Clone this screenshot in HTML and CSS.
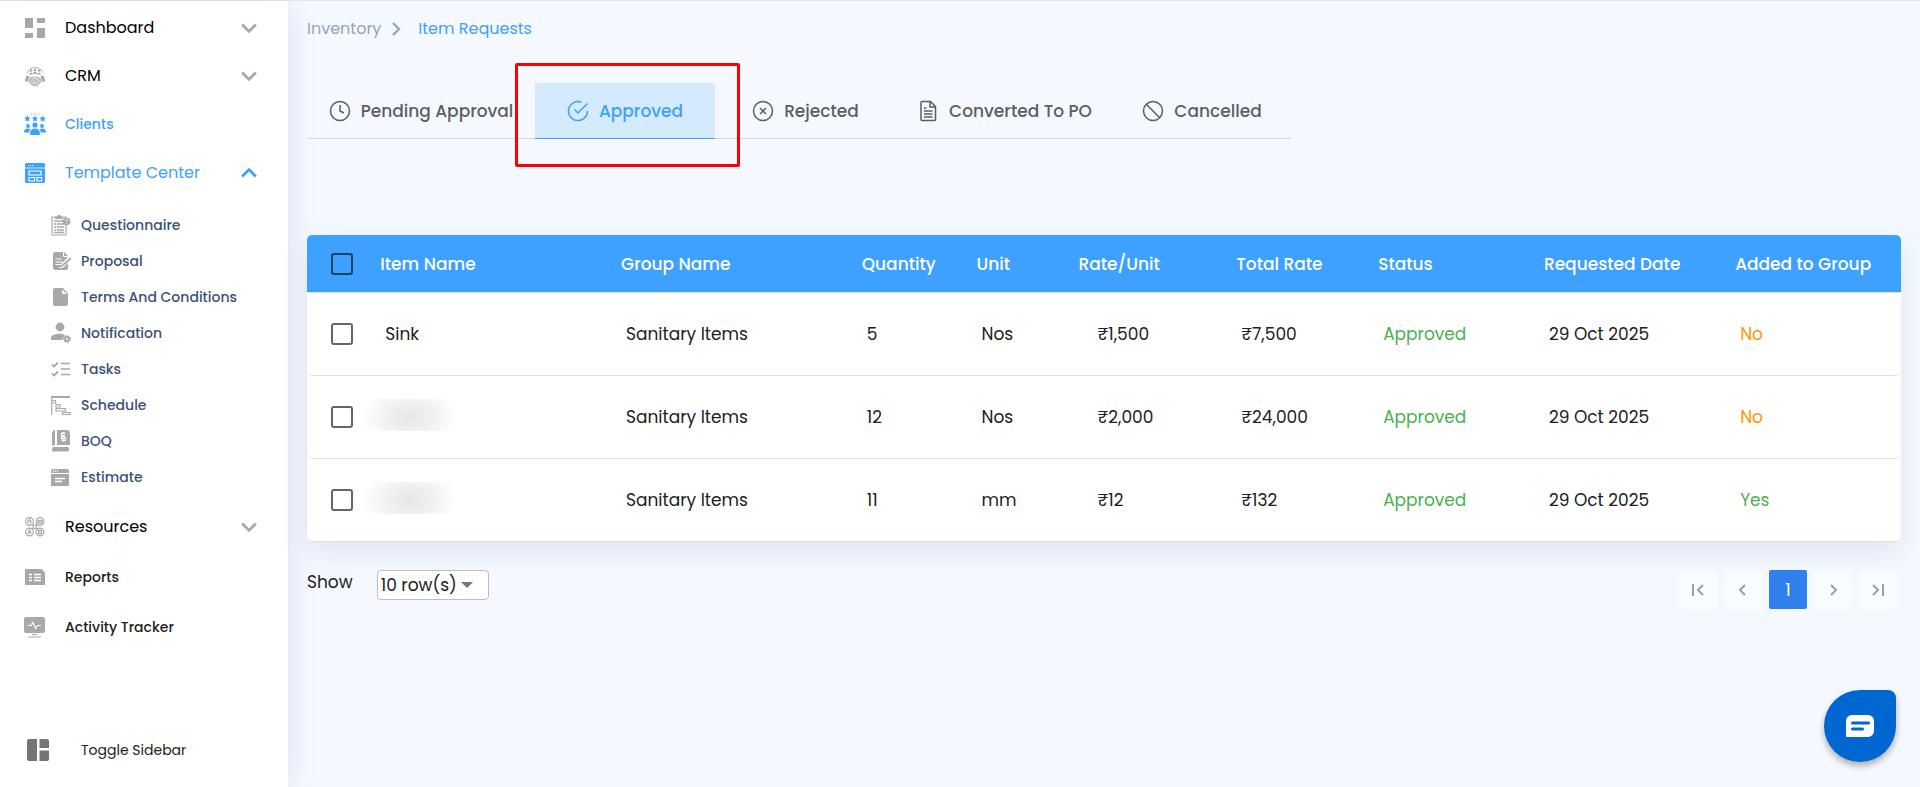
FILE: index.html
```html
<!DOCTYPE html>
<html lang="en">
<head>
<meta charset="utf-8">
<meta name="viewport" content="width=device-width, initial-scale=1">
<title>Item Requests</title>
<link rel="stylesheet" href="styles.css">
</head>
<body>
<div class="app">
  <aside class="sidebar">
    <nav class="nav" aria-label="Main">
      <button class="nav-item" type="button">
        <svg class="icon" viewBox="0 0 22 22" fill="currentColor"><path d="M1 1h8v10H1zM13 1h8v5h-8zM1 16h8v5H1zM13 11h8v10h-8z"/></svg>
        <span class="nav-label">Dashboard</span>
        <svg class="chevron" viewBox="0 0 14 10"><path d="M1 2l6 6 6-6"/></svg>
      </button>
      <button class="nav-item" type="button">
        <svg class="icon" viewBox="0 0 22 22" fill="currentColor"><path d="M3 8a8.500 8.500 0 0 1 16 0" fill="none" stroke="currentColor" stroke-width="1" stroke-dasharray="4 1"/><circle cx="7" cy="5.500" r="1.300"/><circle cx="11" cy="5" r="1.400"/><circle cx="15" cy="5.500" r="1.300"/><path d="M5 9.500c0-2.500 4-2.500 4 0zM9.200 9c0-3 3.600-3 3.600 0zM13 9.500c0-2.500 4-2.500 4 0zM2.500 10.500l3 .8L3.500 17 .8 16zM19.500 10.500l-3 .8 2 5.700 2.700-1z"/><path d="M5.500 12.500l4-1.300 3 .3 4 1.300 1.300 4-2 2-3 2.500h-3.500l-3-2.500-2-2z" fill-opacity=".75"/><path d="M8 14l3-1.500 4.500 4M7 16l3.500 3.500M9.500 15.500l4 3.500" fill="none" stroke="#fff" stroke-width=".8"/></svg>
        <span class="nav-label">CRM</span>
        <svg class="chevron" viewBox="0 0 14 10"><path d="M1 2l6 6 6-6"/></svg>
      </button>
      <a class="nav-item nav-item-link nav-item-active" href="#clients">
        <svg class="icon" viewBox="0 0 22 22" fill="currentColor"><path d="M3.300 2.500l1 2 2.200.3-1.600 1.500.4 2.200-2-1-2 1 .4-2.200L.1 4.800l2.200-.3zM18.700 2.500l1 2 2.200.3-1.600 1.500.4 2.200-2-1-2 1 .4-2.200-1.600-1.500 2.200-.3zM11 2.500l1 2 2.200.3-1.600 1.500.4 2.200-2-1-2 1 .4-2.200-1.600-1.500 2.200-.3z"/><path d="M11 0v1.500M7.500 1l.8 1M14.500 1l-.8 1" stroke="currentColor" stroke-width=".8"/><circle cx="11" cy="12" r="2.600"/><circle cx="4" cy="13" r="1.900"/><circle cx="18" cy="13" r="1.900"/><path d="M6.200 22v-2.500c0-5.300 9.600-5.300 9.600 0V22zM0 19.500c0-4.500 4-4.500 6.500-3-1 1-1.200 2-1.200 3zM22 19.500c0-4.500-4-4.500-6.500-3 1 1 1.200 2 1.200 3z"/></svg>
        <span class="nav-label">Clients</span>
      </a>
      <button class="nav-item nav-item-active" type="button" aria-expanded="true">
        <svg class="icon" viewBox="0 0 22 22"><rect x="1" y="1" width="20" height="20" rx="1.500" fill="currentColor"/><g fill="none" stroke="#fff"><path d="M1 6h20" stroke-width=".8"/><path d="M4 3.500h6" stroke-width="1" stroke-dasharray="1 1"/><path d="M5 9h12v4H5zM5 15.500h5.500V19H5zM13 15.500h4.500V19H13z" stroke-width="1.200"/></g></svg>
        <span class="nav-label">Template Center</span>
        <svg class="chevron" viewBox="0 0 14 10"><path d="M1 8l6-6 6 6"/></svg>
      </button>
      <div class="subnav">
        <a class="subnav-item" href="#questionnaire">
          <svg class="sub-icon" viewBox="0 0 20 22"><path d="M1 3h14v18H1z" fill="none" stroke="currentColor" stroke-width="1.200"/><path d="M4 5V3h2c0-3 4-3 4 0h2v2z" fill="currentColor"/><path d="M3 7h9M3 10h2M6 10h7M3 13h2M6 13h7M3 16h2M6 16h7M3 18.500h10" stroke="currentColor" stroke-width="1.300"/><circle cx="15.500" cy="7.500" r="3.800" fill="currentColor"/><path d="M14.300 6.500c0-1.500 2.500-1.300 2.300 0-.2.800-1 .7-1 1.500M15.600 9v.8" fill="none" stroke="#fff" stroke-width=".8"/></svg>
          <span>Questionnaire</span></a>
        <a class="subnav-item" href="#proposal">
          <svg class="sub-icon" viewBox="0 0 20 22"><path d="M4 2h9l4 4v12a2 2 0 0 1-2 2H4a2 2 0 0 1-2-2V4a2 2 0 0 1 2-2z" fill="currentColor"/><path d="M12.500 2v4.500H17M4.500 9h6M4.500 12h7M4.500 14.500h5M8 17.500h4" fill="none" stroke="#fff" stroke-width="1"/><path d="M11 16l8-8" stroke="#fff" stroke-width="4"/><path d="M11.500 15.500L20 8" stroke="currentColor" stroke-width="1.800"/></svg>
          <span>Proposal</span></a>
        <a class="subnav-item" href="#terms">
          <svg class="sub-icon" viewBox="0 0 20 22"><path d="M4 2h8l5 6v10a2 2 0 0 1-2 2H4a2 2 0 0 1-2-2V4a2 2 0 0 1 2-2z" fill="currentColor"/><path d="M11 3.500V8h4.800z" fill="#fff"/></svg>
          <span>Terms And Conditions</span></a>
        <a class="subnav-item" href="#notification">
          <svg class="sub-icon" viewBox="0 0 20 22" fill="currentColor"><circle cx="9" cy="5" r="4.400"/><path d="M0 18v-2c0-4 9-5.500 14-3l-3 5z"/><circle cx="16" cy="17" r="3" stroke="currentColor" stroke-width="1.600" stroke-dasharray="1.800 1"/><circle cx="16" cy="17" r="1" fill="#fff"/></svg>
          <span>Notification</span></a>
        <a class="subnav-item" href="#tasks">
          <svg class="sub-icon" viewBox="0 0 20 22" fill="none" stroke="currentColor"><path d="M1 6.500l2 2 4-4M1 15.500l2 2 4-4" stroke-width="1.800"/><path d="M10 5.500h9M10 11h9M10 16.500h9" stroke-width="1.400"/></svg>
          <span>Tasks</span></a>
        <a class="subnav-item" href="#schedule">
          <svg class="sub-icon" viewBox="0 0 20 22" fill="none" stroke="currentColor"><path d="M0 3h19" stroke-width="2"/><path d="M.7 3v18M1 6.500h3.500V9H1M5 10.500h4V13H5zM5 14.500h9.500V17H5zM11.500 18.500H19V20.500h-7.500z" stroke-width="1.200"/></svg>
          <span>Schedule</span></a>
        <a class="subnav-item" href="#boq">
          <svg class="sub-icon" viewBox="0 0 20 22"><path d="M4 0v15c-1.500 0-3 .5-3 1.500V4c0-2 1-4 3-4zM6 0h10c2 0 3 2 3 4v11H6z" fill="currentColor"/><rect x="1" y="17" width="17" height="4.500" rx="1.500" fill="currentColor"/><path d="M14 4c-1-2-4.500-1-3.500 1s4 2 4 4-2 2.500-4 1M14 6c-4-1-5 3-1 3" fill="none" stroke="#fff" stroke-width="1.500"/></svg>
          <span>BOQ</span></a>
        <a class="subnav-item" href="#estimate">
          <svg class="sub-icon" viewBox="0 0 20 22"><path d="M2 3h14a2 2 0 0 1 2 2v15H0V5a2 2 0 0 1 2-2z" fill="currentColor"/><path d="M0 7.500h18" stroke="#fff" stroke-width="1"/><path d="M2 5h6" stroke="#fff" stroke-width="1.300" stroke-dasharray="1 1"/><path d="M4 12.500h10M4 15.500h7" stroke="#fff" stroke-width="1.400"/></svg>
          <span>Estimate</span></a>
      </div>
      <button class="nav-item" type="button">
        <svg class="icon" viewBox="0 0 22 22" fill="none" stroke="currentColor"><g stroke-width="1.200"><circle cx="5.500" cy="5.500" r="3.900"/><circle cx="16" cy="5.500" r="3.900"/><circle cx="5.500" cy="16" r="3.900"/><circle cx="16" cy="16" r="3.900"/><circle cx="10.800" cy="10.800" r="1.800"/><path d="M8 8l1.500 1.500M13.500 8L12 9.500M8 13.500L9.500 12M13.500 13.500L12 12"/></g><path d="M4.200 7.500V5l1.300-1.500L6.800 5v2.500M14 7V4.500h4V7zM4 18l1.500-4L7 18M14.500 17.500v-3h3v3z" stroke-width="1.300"/></svg>
        <span class="nav-label">Resources</span>
        <svg class="chevron" viewBox="0 0 14 10"><path d="M1 2l6 6 6-6"/></svg>
      </button>
      <a class="nav-item nav-item-link" href="#reports">
        <svg class="icon" viewBox="0 0 22 22"><path d="M1 3h16.500L21 6.500V19H1z" fill="currentColor"/><path d="M5 8.500h3M5 11.500h3M5 14.500h3M10 8.500h7M10 11.500h7M10 14.500h7" stroke="#fff" stroke-width="1.400"/></svg>
        <span class="nav-label">Reports</span>
      </a>
      <a class="nav-item nav-item-link" href="#activity">
        <svg class="icon" viewBox="0 0 22 22"><rect x="0" y="1" width="21" height="16" rx="2" fill="currentColor"/><path d="M4 9.500h3l2-3 2.500 6 2-3H17" fill="none" stroke="#fff" stroke-width="1.200"/><path d="M8 18.500h5M4 21h13" stroke="currentColor" stroke-width="1"/></svg>
        <span class="nav-label">Activity Tracker</span>
      </a>
    </nav>
    <button class="toggle" type="button">
      <svg class="toggle-icon" viewBox="0 0 22 22" fill="currentColor"><path d="M2 0h8v22H2a2 2 0 0 1-2-2V2a2 2 0 0 1 2-2zM12.500 0H20a2 2 0 0 1 2 2v7h-9.500zM12.500 11.500H22V20a2 2 0 0 1-2 2h-7.500z"/></svg>
      <span>Toggle Sidebar</span>
    </button>
  </aside>

  <main class="main">
    <nav class="breadcrumb" aria-label="Breadcrumb">
      <a class="crumb" href="#inventory">Inventory</a>
      <svg class="crumb-sep" viewBox="0 0 10 14"><path d="M2 1l6 6-6 6"/></svg>
      <a class="crumb crumb-current" href="#item-requests">Item Requests</a>
    </nav>

    <div class="tabs" role="tablist">
      <button class="tab" type="button" role="tab">
        <svg class="tab-icon" viewBox="0 0 22 22"><circle cx="11" cy="11" r="9.500"/><path d="M11 5v6l4 2"/></svg>
        <span>Pending Approval</span>
      </button>
      <button class="tab tab-active" type="button" role="tab" aria-selected="true">
        <svg class="tab-icon" viewBox="0 0 22 22"><path d="M14.500 2.200A9.500 9.500 0 1 0 20.500 11"/><path d="M7.500 9.500l3.500 3.500L20.500 3.500"/></svg>
        <span>Approved</span>
      </button>
      <button class="tab" type="button" role="tab">
        <svg class="tab-icon" viewBox="0 0 22 22"><circle cx="11" cy="11" r="9.500"/><path d="M8 8l6 6M14 8l-6 6"/></svg>
        <span>Rejected</span>
      </button>
      <button class="tab" type="button" role="tab">
        <svg class="tab-icon" viewBox="0 0 22 22"><path d="M5 1.500h8.500L18.500 6.500v13a1 1 0 0 1-1 1H5a1 1 0 0 1-1-1v-17a1 1 0 0 1 1-1zM13 1.500V7h5.500M7 8h2.500M7 11h8.500M7 14h8.500M7 17h8.500"/></svg>
        <span>Converted To PO</span>
      </button>
      <button class="tab" type="button" role="tab">
        <svg class="tab-icon" viewBox="0 0 22 22"><circle cx="11" cy="11" r="9.500"/><path d="M4.300 4.300l13.400 13.400"/></svg>
        <span>Cancelled</span>
      </button>
    </div>

    <table class="requests">
      <colgroup><col class="c-check"><col class="c-wide"><col class="c-wide"><col class="c-qty"><col class="c-unit"><col class="c-rate"><col class="c-total"><col class="c-status"><col class="c-date"><col class="c-added"></colgroup>
      <thead>
        <tr>
          <th class="check-cell"><input class="check" type="checkbox" aria-label="Select all"></th>
          <th>Item Name</th><th>Group Name</th><th>Quantity</th><th>Unit</th><th>Rate/Unit</th><th>Total Rate</th><th>Status</th><th>Requested Date</th><th>Added to Group</th>
        </tr>
      </thead>
      <tbody>
        <tr>
          <td class="check-cell"><input class="check" type="checkbox" aria-label="Select row 1"></td>
          <td>Sink</td><td>Sanitary Items</td><td>5</td><td>Nos</td><td class="rate">₹1,500</td><td>₹7,500</td><td class="good">Approved</td><td>29 Oct 2025</td><td class="warn">No</td>
        </tr>
        <tr>
          <td class="check-cell"><input class="check" type="checkbox" aria-label="Select row 2"></td>
          <td class="hidden-name"><div class="smudge"></div></td><td>Sanitary Items</td><td>12</td><td>Nos</td><td class="rate">₹2,000</td><td>₹24,000</td><td class="good">Approved</td><td>29 Oct 2025</td><td class="warn">No</td>
        </tr>
        <tr>
          <td class="check-cell"><input class="check" type="checkbox" aria-label="Select row 3"></td>
          <td class="hidden-name"><div class="smudge"></div></td><td>Sanitary Items</td><td>11</td><td>mm</td><td class="rate">₹12</td><td>₹132</td><td class="good">Approved</td><td>29 Oct 2025</td><td class="good">Yes</td>
        </tr>
      </tbody>
    </table>

    <div class="table-footer">
      <div class="page-size">
        <label for="rows">Show</label>
        <div class="select-wrap">
          <select class="rows-select" id="rows"><option>10 row(s)</option><option>25 row(s)</option><option>50 row(s)</option></select>
          <svg class="select-arrow" viewBox="0 0 12 6" fill="currentColor"><path d="M0 0h12L6 6z"/></svg>
        </div>
      </div>
      <nav class="pager" aria-label="Pagination">
        <button class="page" type="button" aria-label="First page"><svg class="page-icon" viewBox="0 0 14 14"><path d="M2 1v12M12 2L7 7l5 5"/></svg></button>
        <button class="page" type="button" aria-label="Previous page"><svg class="page-icon" viewBox="0 0 14 14"><path d="M9 2L4 7l5 5"/></svg></button>
        <button class="page page-current" type="button">1</button>
        <button class="page" type="button" aria-label="Next page"><svg class="page-icon" viewBox="0 0 14 14"><path d="M5 2l5 5-5 5"/></svg></button>
        <button class="page" type="button" aria-label="Last page"><svg class="page-icon" viewBox="0 0 14 14"><path d="M2 2l5 5-5 5M12 1v12"/></svg></button>
      </nav>
    </div>
  </main>
</div>
<button class="chat" type="button" aria-label="Open chat">
  <svg class="chat-icon" viewBox="0 0 28 22"><path d="M6 0h16a6 6 0 0 1 6 6v10a6 6 0 0 1-6 6H1a1 1 0 0 1-1-1V6a6 6 0 0 1 6-6z" fill="#fff"/><path d="M6.500 8h16M6.500 14h10" stroke="#0066d1" stroke-width="3" stroke-linecap="round"/></svg>
</button>
</body>
</html>
```
FILE: styles.css
```css
* { box-sizing: border-box; }

body {
  margin: 0;
  background: #f5f9ff;
  color: #212121;
  font-family: Poppins, Inter, "Noto Sans", sans-serif;
  font-size: 17px;
  line-height: 24px;
}

button, select, input { font: inherit; color: inherit; margin: 0; }
button { background: none; border: 0; padding: 0; cursor: pointer; }
a { color: inherit; text-decoration: none; }

.app {
  display: flex;
  min-height: 100vh;
  border-top: 1px solid #e6eaef;
}

/* Sidebar */
.sidebar {
  flex: 0 0 288px;
  display: flex;
  flex-direction: column;
  justify-content: space-between;
  padding: 3px 0 16px;
  background: #fff;
  box-shadow: 0 0 28px rgba(60, 80, 140, 0.14);
}

.nav { display: flex; flex-direction: column; }

.nav-item {
  display: flex;
  align-items: center;
  gap: 19px;
  height: 48px;
  padding: 0 31px 0 24px;
  color: #000;
  font-size: 16px;
  text-align: left;
}
.nav-item-link { font-size: 14px; font-weight: 500; color: #212121; }
.nav-label { flex: 1; }
.nav-item[aria-expanded], .subnav ~ .nav-item { height: 50px; }
.icon { flex: none; width: 22px; height: 22px; color: #a7a8aa; }
.chevron {
  flex: none;
  width: 16px;
  height: 12px;
  fill: none;
  stroke: #a7a8aa;
  stroke-width: 2.4;
}
.nav-item-active, .nav-item-active .icon { color: #3ea0ff; }
.nav-item-active .chevron { stroke: #3ea0ff; }

.subnav { padding: 9px 0 7px; }
.subnav-item {
  display: flex;
  align-items: center;
  gap: 10px;
  height: 36px;
  padding-left: 51px;
  color: #3a5275;
  font-size: 14px;
  font-weight: 500;
}
.sub-icon { width: 20px; height: 22px; color: #a7a8aa; }

.toggle {
  display: flex;
  align-items: center;
  gap: 32px;
  height: 42px;
  padding-left: 27px;
  font-size: 14px;
}
.toggle-icon { width: 22px; height: 22px; color: #757575; }

/* Main column */
.main { flex: 1; min-width: 0; padding: 16px 19px 24px; }

.breadcrumb { display: flex; align-items: center; gap: 10px; font-size: 16px; }
.crumb { color: #94a3bd; }
.crumb-current { color: #3ea0ff; margin-left: 7px; }
.crumb-sep { width: 10px; height: 14px; fill: none; stroke: #94a3bd; stroke-width: 2.4; }

.tabs {
  display: grid;
  grid-template-columns: 228fr 180fr 181fr 217fr 178fr;
  max-width: 984px;
  margin-top: 42px;
  border-bottom: 1px solid #d5dae0;
}
.tab {
  position: relative;
  display: flex;
  align-items: center;
  justify-content: center;
  gap: 10px;
  height: 56px;
  margin-bottom: -1px;
  color: #5b5f63;
  font-weight: 500;
  white-space: nowrap;
}
.tab-icon { flex: none; width: 22px; height: 22px; fill: none; stroke: currentColor; stroke-width: 1.5; }
.tab-active {
  background: #d4eaff;
  color: #3ea0ff;
  border-bottom: 1px solid #3ea0ff;
}
.tab-active::after {
  content: "";
  position: absolute;
  inset: -20px -25px -29px -20px;
  border: 3px solid #ff0000;
  border-radius: 2px;
  pointer-events: none;
}

/* Table */
.requests {
  width: 100%;
  margin-top: 96px;
  table-layout: fixed;
  border-collapse: separate;
  border-spacing: 0;
  border-radius: 5px;
  background: #fff;
  box-shadow: 0 10px 28px rgba(60, 80, 130, 0.12);
}
.c-check { width: 4.6%; }
.c-wide { width: 15.1%; }
.c-qty { width: 7.2%; }
.c-unit { width: 6.4%; }
.c-rate { width: 9.9%; }
.c-total { width: 8.9%; }
.c-status { width: 10.4%; }
.c-date { width: 12%; }
.c-added { width: 10.4%; }

.requests th {
  height: 58px;
  padding: 0;
  background: #3ea0ff;
  border-bottom: 1px solid #e0e0e0;
  color: #fff;
  font-weight: 500;
  text-align: left;
  white-space: nowrap;
}
.requests th:first-child { border-top-left-radius: 5px; }
.requests th:last-child { border-top-right-radius: 5px; }
.requests td {
  height: 83px;
  padding: 0 0 0 5px;
  border-bottom: 1px solid #e0e0e0;
  white-space: nowrap;
}
.requests td:first-child { border-bottom-left-radius: 5px; }
.requests td:last-child { border-bottom-right-radius: 5px; }
.requests .check-cell { padding: 0 0 0 24px; }
.requests .rate { padding-left: 19px; }
.requests .hidden-name { padding: 0; }
.good { color: #4caf50; }
.warn { color: #ff9800; }

.check {
  appearance: none;
  display: block;
  width: 22px;
  height: 22px;
  border: 2px solid #666;
  border-radius: 3px;
}
th .check { border-color: #1d4264; }

.smudge {
  width: 96px;
  height: 32px;
  margin-left: -16px;
  margin-bottom: 4px;
  background: radial-gradient(ellipse 48px 32px at 46px 18px, #e6e6e6, #f1f1f1 50%, #fff);
}

/* Table footer */
.table-footer {
  display: flex;
  justify-content: space-between;
  align-items: flex-start;
  padding: 28px 4px 0 0;
}
.page-size { display: flex; align-items: flex-start; gap: 24px; }
.select-wrap { position: relative; }
.rows-select {
  appearance: none;
  display: block;
  width: 112px;
  height: 30px;
  padding: 0 3px;
  border: 1px solid #bdbdbd;
  border-radius: 4px;
  background: #fff;
}
.select-arrow {
  position: absolute;
  right: 16px;
  top: 12px;
  width: 12px;
  height: 6px;
  color: #757575;
  pointer-events: none;
}
.pager { display: flex; gap: 7px; }
.page {
  display: grid;
  place-items: center;
  width: 38px;
  height: 39px;
  border-radius: 4px;
  background: #f9fcff;
  color: #9e9e9e;
}
.page-current { background: #2f80ed; color: #fff; border-radius: 2px; }
.page-icon { width: 14px; height: 14px; fill: none; stroke: currentColor; stroke-width: 2; }

.chat {
  position: fixed;
  right: 24px;
  bottom: 25px;
  display: grid;
  place-items: center;
  width: 72px;
  height: 72px;
  border-radius: 50% 8px 50% 50%;
  background: #0066d1;
  box-shadow: 0 4px 6px rgba(0, 0, 0, 0.3);
}
.chat-icon { width: 28px; height: 22px; }
```
